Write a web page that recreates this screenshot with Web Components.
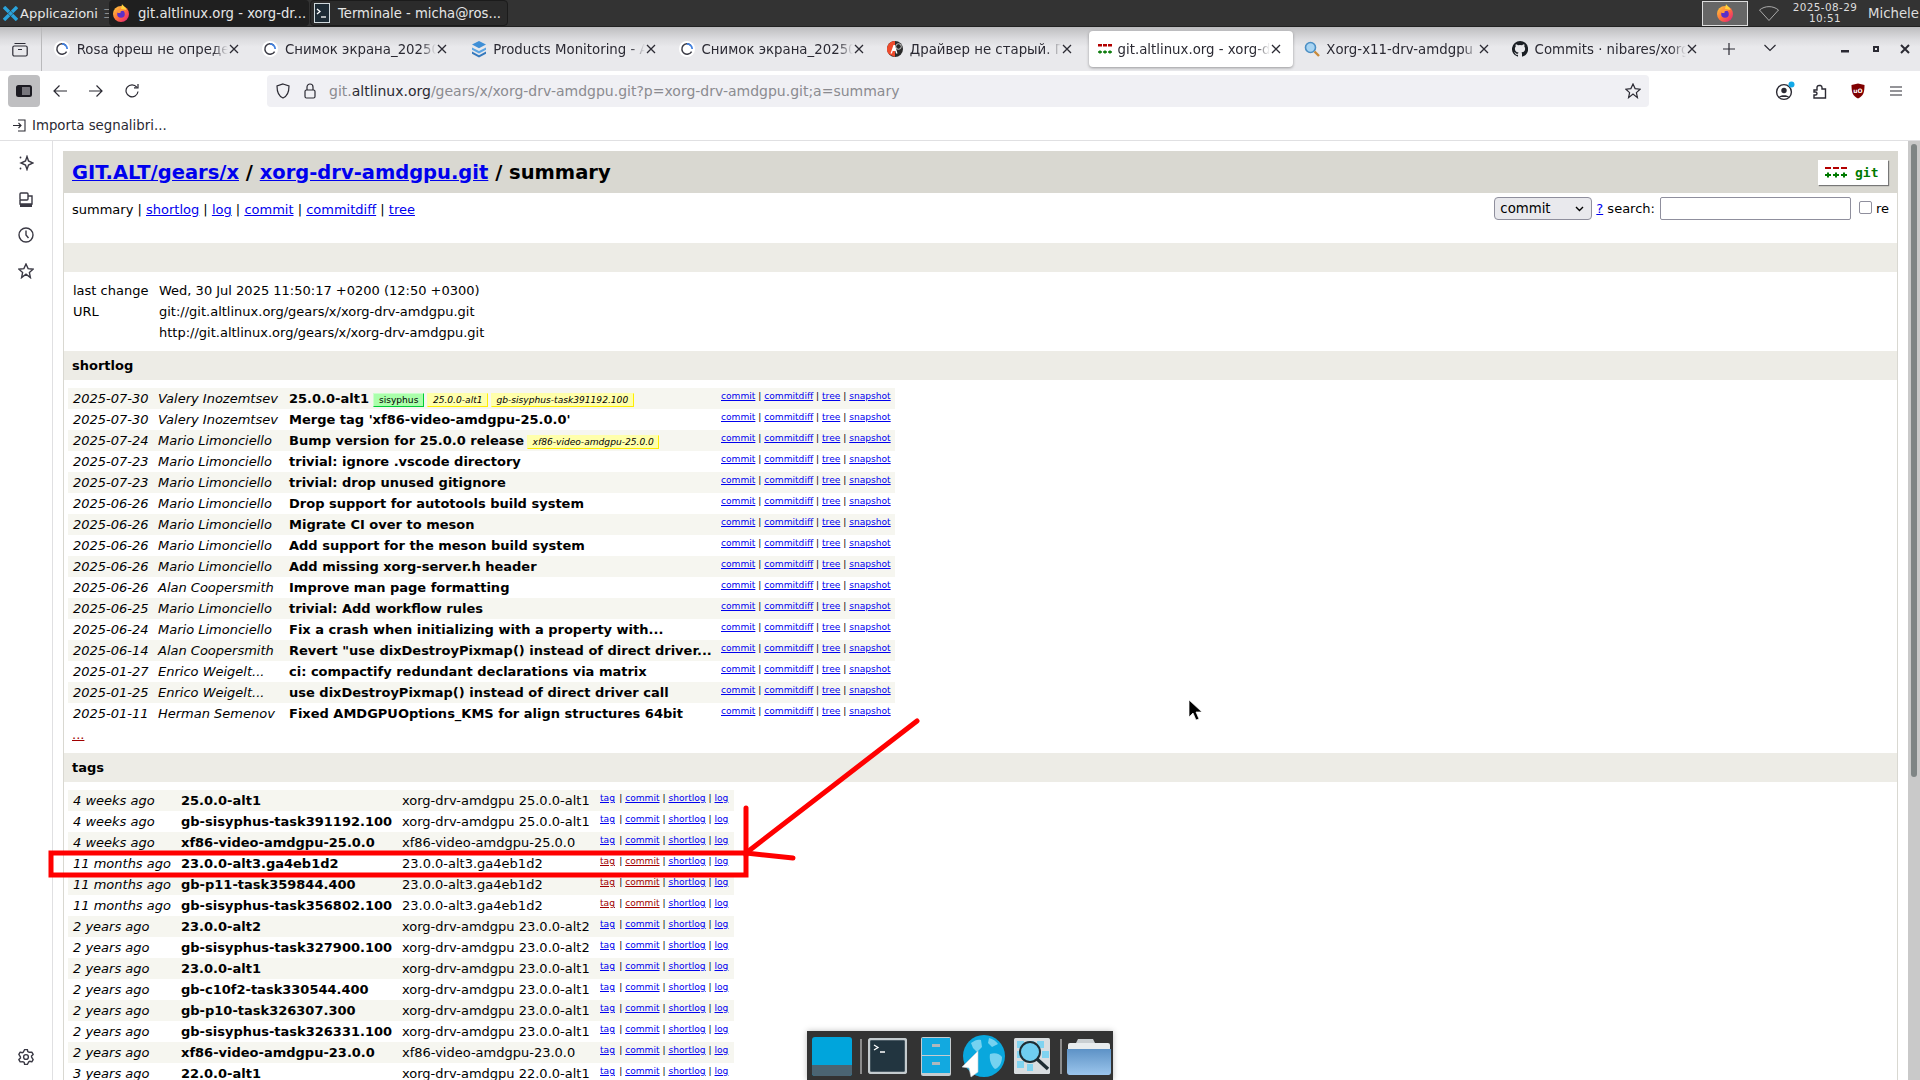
<!DOCTYPE html>
<html lang="it">
<head>
<meta charset="utf-8">
<title>git.altlinux.org - xorg-drv-amdgpu.git/summary</title>
<style>
    html, body { margin: 0; height: 100%; overflow: hidden; background: #fff; }
    body { position: relative; width: 1920px; height: 1080px; font-family: "DejaVu Sans", sans-serif; }
    .window { display: flex; flex-direction: column; height: 1080px; }
    .main { display: flex; flex: 1; min-height: 0; }
</style>
</head>
<body>
<div class="window">
    <desk-panel></desk-panel>
    <tab-strip></tab-strip>
    <nav-toolbar></nav-toolbar>
    <bookmark-bar></bookmark-bar>
    <div class="main">
        <side-rail></side-rail>
        <gitweb-page></gitweb-page>
    </div>
</div>
<red-markup></red-markup>
<app-dock></app-dock>

<script>
const FONT = `"DejaVu Sans", sans-serif`;

// favicons and toolbar glyphs, drawn by hand
const ICONS = {
    loader: `<svg width="16" height="16" viewBox="0 0 16 16"><circle cx="8" cy="8" r="8" fill="#fff"/><path d="M11.6 4.2A5.2 5.2 0 1 0 12.6 10.6" fill="none" stroke="#3c3c46" stroke-width="1.5"/><path d="M8 2.8a5.2 5.2 0 0 1 5.2 5.2" fill="none" stroke="#3f7fe0" stroke-width="1.7"/></svg>`,
    stack: `<svg width="16" height="18" viewBox="0 0 16 18"><path d="M8 1l7 3.6-7 3.6-7-3.6z" fill="#3f8fd6"/><path d="M1 7.4l7 3.6 7-3.6v2.4l-7 3.6-7-3.6z" fill="#5ba4e2"/><path d="M1 11.6l7 3.6 7-3.6v2.2L8 17.400l-7-3.600z" fill="#3579bd"/></svg>`,
    redball: `<svg width="16" height="16" viewBox="0 0 16 16"><circle cx="8" cy="8" r="8" fill="#2a2a2a"/><path d="M8 0a8 8 0 0 0-6 13.300L8 16z" fill="#ef4b2c"/><path d="M3.500 12.500L6.500 4h1.500l2.500 8.500H9L8.400 10H5.700l-.8 2.500z" fill="#fff"/><circle cx="11.500" cy="5.500" r="2.800" fill="none" stroke="#ccc" stroke-width="1"/></svg>`,
    git: `<svg width="16" height="16" viewBox="0 0 16 16"><path d="M1 3h4v2.500H1zM6 3h4v2.500H6zM11 3h4v2.500h-4z" fill="#b30000"/><path d="M1 11h4M3 9.500v3M6 11h4M8 9.500v3M11 11h4M13 9.500v3" stroke="#087a08" stroke-width="1.700"/></svg>`,
    lens: `<svg width="16" height="16" viewBox="0 0 16 16"><circle cx="6.500" cy="6.500" r="5" fill="#a8d4f2" stroke="#4b8fc4" stroke-width="1.600"/><path d="M10.500 10.500l4.500 4.500" stroke="#c98a3a" stroke-width="2.400"/></svg>`,
    github: `<svg width="16" height="16" viewBox="0 0 16 16"><path fill="#1b1f24" d="M8 0a8 8 0 0 0-2.530 15.590c.4.070.55-.170.55-.380v-1.340c-2.230.480-2.700-1.070-2.700-1.070-.360-.930-.890-1.170-.890-1.170-.730-.500.050-.490.050-.490.800.060 1.230.830 1.230.830.710 1.220 1.870.870 2.330.660.070-.520.280-.870.510-1.070-1.780-.200-3.640-.890-3.640-3.950 0-.870.310-1.590.820-2.150-.080-.200-.360-1.020.080-2.120 0 0 .670-.210 2.200.820a7.650 7.650 0 0 1 4 0c1.530-1.040 2.200-.820 2.200-.820.440 1.100.160 1.920.080 2.120.510.560.820 1.270.820 2.150 0 3.070-1.870 3.750-3.650 3.950.290.250.540.730.540 1.480v2.200c0 .210.150.460.550.380A8 8 0 0 0 8 0z"/></svg>`,
    firefox: `<svg width="16" height="18" viewBox="0 0 16 18"><defs><linearGradient id="ff" x1="0" y1="0" x2="1" y2="1"><stop offset="0" stop-color="#ffd23c"/><stop offset=".5" stop-color="#ff7139"/><stop offset="1" stop-color="#e31587"/></linearGradient></defs><circle cx="8" cy="10" r="8" fill="url(#ff)"/><path d="M9 0c1 2 4 3 4.500 6L8 5z" fill="#ffd23c"/><circle cx="8" cy="10" r="3.800" fill="#5b2fc9"/><path d="M4 7c2-2 5-2 7 0-2-.600-4 0-3.500 2L4.500 9z" fill="#ff9a3c"/></svg>`,
    terminal: `<svg width="16" height="20" viewBox="0 0 16 20"><rect x=".5" y=".5" width="15" height="19" fill="#1d2b35" stroke="#cfd8dc"/><path d="M3 6l3 2.500-3 2.500" fill="none" stroke="#fff" stroke-width="1.300"/><path d="M7 14h5" stroke="#fff" stroke-width="1.300"/></svg>`
};

// six tooth outline for the settings button
function gearPath(cx, cy, outer, inner) {
    const pts = [];
    for (let i = 0; i < 6; i++) {
        const a = i * Math.PI / 3 - Math.PI / 2;
        [[-0.32, outer], [0.32, outer], [0.6, inner], [0.98, inner]].forEach(([d, r]) => {
            pts.push(`${(cx + r * Math.cos(a + d * 0.55)).toFixed(2)} ${(cy + r * Math.sin(a + d * 0.55)).toFixed(2)}`);
        });
    }
    return 'M' + pts.join('L') + 'z';
}

class DeskPanel extends HTMLElement {
    constructor() {
        super();
        this.attachShadow({ mode: 'open' });
    }

    connectedCallback() {
        this.shadowRoot.innerHTML = `
            <style>
                :host { display: flex; align-items: center; height: 27px; background: #333; color: #e6e6e6; font: 13px ${FONT}; overflow: hidden; box-sizing: border-box; border-bottom: 1px solid #222; }
                .apps { display: flex; align-items: center; gap: 2px; padding-left: 3px; width: 109px; box-sizing: border-box; flex: none; white-space: nowrap; overflow: hidden; }
                .cut { color: #8d8d8d; margin-left: 3px; }
                .btn { display: flex; align-items: center; gap: 9px; height: 26px; width: 200px; box-sizing: border-box; padding-left: 4px; border-radius: 4px; background: #1f1f1f; flex: none; white-space: nowrap; font-size: 13.200px; }
                .btn + .btn { background: #2b2b2b; border: 1px solid #1b1b1b; width: 198px; padding-left: 3px; margin-left: 1px; gap: 8px; }
                .tray { margin-left: auto; display: flex; align-items: center; flex: none; }
                .ff { width: 46px; height: 25px; box-sizing: border-box; border: 1px solid #ddd; background: #666; display: flex; align-items: center; justify-content: center; }
                .wifi { margin: 0 11px; display: block; }
                .clock { font-size: 10.400px; line-height: 11px; text-align: center; width: 70px; letter-spacing: .4px; color: #ddd; white-space: nowrap; }
                .user { margin-left: 8px; width: 52px; overflow: hidden; white-space: nowrap; color: #ddd; font-size: 13.300px; }
            </style>
            <div class="apps">
                <svg width="15" height="15" viewBox="0 0 15 15" style="flex:none"><path d="M1 1l5 5M14 1L9 6M1 14l5-5M14 14L9 9" stroke="#2aa3dc" stroke-width="3.400"/><path d="M7.500 5L10 7.500 7.500 10 5 7.500z" fill="#2aa3dc"/></svg>
                <span>Applicazioni</span><span class="cut">Ξ</span>
            </div>
            <div class="btn">${ICONS.firefox}<span>git.altlinux.org - xorg-dr...</span></div>
            <div class="btn">${ICONS.terminal}<span>Terminale - micha@ros...</span></div>
            <div class="tray">
                <div class="ff">${ICONS.firefox}</div>
                <svg class="wifi" width="20" height="16" viewBox="0 0 20 16"><path d="M.5 5C6 .5 14 .5 19.500 5L10 15.500z" fill="none" stroke="#c8c8c8" stroke-width=".8"/></svg>
                <div class="clock">2025-08-29<br>10:51</div>
                <div class="user">Michele</div>
            </div>
        `;
    }
}

class BrowserTab extends HTMLElement {
    constructor() {
        super();
        this.attachShadow({ mode: 'open' });
    }

    connectedCallback() {
        this.render();
    }

    render() {
        const title = this.getAttribute('title') || '';
        const icon = ICONS[this.getAttribute('icon')] || '';
        this.shadowRoot.innerHTML = `
            <style>
                :host { display: flex; align-items: center; width: 204px; height: 36px; margin: 0 2.150px; padding: 0 12px 0 7px; box-sizing: border-box; color: #2b2a33; font: 13.330px ${FONT}; flex: none; border-radius: 4px; }
                :host([active]) { background: #fff; box-shadow: 0 1px 3px rgba(0,0,0,.35); padding-left: 8px; }
                .fav { width: 16px; height: 18px; display: flex; align-items: center; justify-content: center; flex: none; margin-right: 6.500px; }
                :host([active]) .fav { margin-right: 5px; }
                .text { flex: 1; overflow: hidden; white-space: nowrap; -webkit-mask-image: linear-gradient(90deg, #000 90%, transparent); mask-image: linear-gradient(90deg, #000 90%, transparent); }
                svg.x { flex: none; margin-left: 1px; }
            </style>
            <span class="fav">${icon}</span>
            <span class="text">${title}</span>
            <svg class="x" width="10" height="10" viewBox="0 0 10 10"><path d="M1 1l8 8M9 1L1 9" stroke="#2b2a33" stroke-width="1.300"/></svg>
        `;
    }
}

class TabStrip extends HTMLElement {
    constructor() {
        super();
        this.attachShadow({ mode: 'open' });
    }

    connectedCallback() {
        const tabs = [
            ['loader', 'Rosa фреш не определяет'],
            ['loader', 'Снимок экрана_20250829'],
            ['stack', 'Products Monitoring - ALT'],
            ['loader', 'Снимок экрана_20250829'],
            ['redball', 'Драйвер не старый. Просто'],
            ['git', 'git.altlinux.org - xorg-drv', true],
            ['lens', 'Xorg-x11-drv-amdgpu'],
            ['github', 'Commits · nibares/xorg-drv']
        ];
        this.shadowRoot.innerHTML = `
            <style>
                :host { display: flex; align-items: center; height: 44px; background: linear-gradient(#bdbdbf 0, #dcdcdf 12px, #e9e9ec 20px); flex: none; }
                .lib { width: 42px; height: 44px; box-sizing: border-box; border-right: 1px solid #b9b9bb; display: flex; align-items: center; justify-content: center; flex: none; margin-right: 3px; padding-right: 2px; }
                .tabs { display: flex; flex: none; }
                .new { margin-left: 12px; display: block; flex: none; }
                .more { margin-left: 29px; display: block; flex: none; margin-top: -2px; }
                .win { margin-left: auto; display: flex; align-items: center; padding-right: 10px; flex: none; }
                .win svg { display: block; }
            </style>
            <div class="lib">
                <svg width="16" height="16" viewBox="0 0 16 16" fill="none" stroke="#2b2a33" stroke-width="1.200"><rect x=".8" y="5" width="14.400" height="10" rx="1.500"/><path d="M2.500 2.500h11M6 8.500h4"/></svg>
            </div>
            <div class="tabs">
                ${tabs.map(t => `<browser-tab icon="${t[0]}" title="${t[1]}" ${t[2] ? 'active' : ''}></browser-tab>`).join('')}
            </div>
            <svg class="new" width="12" height="12" viewBox="0 0 12 12"><path d="M6 0v12M0 6h12" stroke="#2b2a33" stroke-width="1.200"/></svg>
            <svg class="more" width="12" height="8" viewBox="0 0 12 8"><path d="M.5 1L6 6.500 11.500 1" fill="none" stroke="#2b2a33" stroke-width="1.200"/></svg>
            <div class="win">
                <svg width="8" height="3" viewBox="0 0 8 3" style="margin-right:24px;margin-top:5px"><rect width="8" height="2.500" fill="#2b2a33"/></svg>
                <svg width="6" height="6" viewBox="0 0 6 6" style="margin-right:21px"><rect x="1" y="1" width="4" height="4" fill="none" stroke="#2b2a33" stroke-width="2"/></svg>
                <svg width="10" height="10" viewBox="0 0 10 10"><path d="M1 1l8 8M9 1L1 9" stroke="#2b2a33" stroke-width="2"/></svg>
            </div>
        `;
    }
}

class NavToolbar extends HTMLElement {
    constructor() {
        super();
        this.attachShadow({ mode: 'open' });
    }

    connectedCallback() {
        const stroke = 'fill="none" stroke="#2b2a33" stroke-width="1.200"';
        this.shadowRoot.innerHTML = `
            <style>
                :host { display: flex; align-items: center; height: 46px; background: #fff; flex: none; padding: 4px 0 10px 8px; box-sizing: border-box; color: #2b2a33; }
                .side { width: 32px; height: 32px; border-radius: 4px; background: #bfbfc1; display: flex; align-items: center; justify-content: center; flex: none; }
                .nav { flex: none; display: block; }
                .url { width: 1382px; height: 32px; margin-left: 128px; border-radius: 4px; background: #f0f0f4; display: flex; align-items: center; box-sizing: border-box; padding-left: 9px; flex: none; font: 14px ${FONT}; color: #8b8b90; white-space: nowrap; }
                .url b { font-weight: 400; color: #2b2a33; }
                .addr { margin-left: 13px; flex: 1; overflow: hidden; }
                .tools { flex: none; margin-left: 126px; display: flex; align-items: center; }
                .star { margin-right: 8px; flex: none; }
            </style>
            <div class="side"><svg width="16" height="12" viewBox="0 0 16 12"><rect x="1" y="1" width="14" height="10" rx="1.500" fill="#77767c" stroke="#1c1b22" stroke-width="2"/><rect x="1" y="1" width="5" height="10" fill="#1c1b22"/></svg></div>
            <svg class="nav" style="margin-left:13px" width="14" height="14" viewBox="0 0 14 14"><path d="M6.500 1.500L1 7l5.500 5.500M1 7h13" ${stroke}/></svg>
            <svg class="nav" style="margin-left:22px" width="14" height="14" viewBox="0 0 14 14"><path d="M7.500 1.500L13 7l-5.500 5.500M13 7H0" ${stroke}/></svg>
            <svg class="nav" style="margin-left:22px" width="14" height="14" viewBox="0 0 14 14"><path d="M11.800 3.200A6 6 0 1 0 13 7.500" ${stroke}/><path d="M9 3.800h4V0" ${stroke}/></svg>
            <div class="url">
                <svg width="14" height="16" viewBox="0 0 14 16" style="flex:none"><path d="M7 1l6 2c0 6-1 10-6 12C2 13 1 9 1 3z" ${stroke}/></svg>
                <svg width="12" height="16" viewBox="0 0 12 16" style="flex:none;margin-left:14px"><rect x="1" y="7" width="10" height="8" rx="1.500" ${stroke}/><path d="M3 7V4a3 3 0 0 1 6 0v3" ${stroke}/></svg>
                <span class="addr">git.<b>altlinux.org</b>/gears/x/xorg-drv-amdgpu.git?p=xorg-drv-amdgpu.git;a=summary</span>
                <svg class="star" width="16" height="16" viewBox="0 0 16 16"><path d="M8 1l2.100 4.600 5 .6-3.700 3.400 1 5L8 11.100 3.600 14.600l1-5L.9 6.200l5-.6z" ${stroke}/></svg>
            </div>
            <div class="tools">
                <svg width="18" height="18" viewBox="0 0 18 18" style="overflow:visible"><circle cx="9" cy="10" r="7.400" fill="none" stroke="#2b2a33" stroke-width="1.400"/><circle cx="9" cy="8.500" r="2.700" fill="#2b2a33"/><path d="M4 15c1-2.500 9-2.500 10 0" fill="#2b2a33"/><circle cx="16.500" cy="2.500" r="3" fill="#12a9e8"/></svg>
                <svg width="14" height="16" viewBox="0 0 14 16" style="margin-left:20px"><path d="M1 7h3V4.500a2 2 0 0 1 2.500-2h1A2 2 0 0 1 9 4.500V6h3.500v9H1v-3h1.500a1.500 1.500 0 0 0 0-3H1z" fill="none" stroke="#2b2a33" stroke-width="1.400"/></svg>
                <svg width="14" height="16" viewBox="0 0 14 16" style="margin-left:24px"><path d="M7 .5l6.500 1.500c0 7-1 11-6.500 13.500C1.500 13 .5 9 .5 2z" fill="#800000"/><text x="7" y="9.500" font-family="DejaVu Sans" font-size="6" font-weight="700" fill="#fff" text-anchor="middle">uO</text></svg>
                <svg width="12" height="10" viewBox="0 0 12 10" style="margin-left:25px"><path d="M0 1h12M0 5h12M0 9h12" stroke="#2b2a33" stroke-width="1.200"/></svg>
            </div>
        `;
    }
}

class BookmarkBar extends HTMLElement {
    constructor() {
        super();
        this.attachShadow({ mode: 'open' });
    }

    connectedCallback() {
        this.shadowRoot.innerHTML = `
            <style>
                :host { display: flex; align-items: center; gap: 6px; height: 24px; background: #fff; border-bottom: 1px solid #e0e0e2; padding: 0 0 6px 13px; box-sizing: border-box; font: 13.330px ${FONT}; color: #2b2a33; flex: none; }
            </style>
            <svg width="13" height="13" viewBox="0 0 13 13" fill="none" stroke="#2b2a33" stroke-width="1.100"><path d="M5 1h7v11H5M0 6.500h8M5.500 4l2.500 2.500L5.500 9"/></svg>
            <span>Importa segnalibri...</span>
        `;
    }
}

class SideRail extends HTMLElement {
    constructor() {
        super();
        this.attachShadow({ mode: 'open' });
    }

    connectedCallback() {
        const s = 'fill="none" stroke="#3a3944" stroke-width="1.400"';
        this.shadowRoot.innerHTML = `
            <style>
                :host { display: flex; flex-direction: column; align-items: center; width: 53px; box-sizing: border-box; flex: none; background: #fff; border-right: 1px solid #e0e0e2; padding: 14px 0 15px; }
                svg { display: block; margin-bottom: 20px; }
                svg:last-child { margin: auto 0 0; }
            </style>
            <svg width="16" height="16" viewBox="0 0 16 16"><path d="M9 1.500l1.500 4.500 4.500 2-4.500 2L9 14.500 7.500 10 3 8l4.500-2z" ${s}/><circle cx="2.500" cy="2.500" r=".9" fill="#3a3944"/><circle cx="2.500" cy="13.500" r=".9" fill="#3a3944"/></svg>
            <svg width="16" height="16" viewBox="0 0 16 16" style="transform:translateY(1px)"><rect x="2" y="1" width="8" height="7" rx="1" ${s}/><path d="M10 4h4v8H2V8" ${s}/><rect x="2" y="12" width="12" height="3" fill="#3a3944"/></svg>
            <svg width="16" height="16" viewBox="0 0 16 16"><circle cx="8" cy="8" r="7" ${s}/><path d="M8 3.500V8l2.500 3" ${s}/></svg>
            <svg width="16" height="16" viewBox="0 0 16 16"><path d="M8 1l2.100 4.600 5 .6-3.700 3.400 1 5L8 11.100 3.600 14.600l1-5L.9 6.200l5-.6z" ${s}/></svg>
            <svg width="16" height="16" viewBox="0 0 16 16"><circle cx="8" cy="8" r="2.400" ${s}/><path d="${gearPath(8, 8, 7.600, 5.600)}" ${s} stroke-linejoin="round"/></svg>
        `;
    }
}

class GitwebPage extends HTMLElement {
    constructor() {
        super();
        this.attachShadow({ mode: 'open' });
    }

    shortlog() {
        const rows = [
            ['2025-07-30', 'Valery Inozemtsev', '25.0.0-alt1', [['ref-head', 'sisyphus'], ['ref-tag', '25.0.0-alt1'], ['ref-tag', 'gb-sisyphus-task391192.100']]],
            ['2025-07-30', 'Valery Inozemtsev', "Merge tag 'xf86-video-amdgpu-25.0.0'"],
            ['2025-07-24', 'Mario Limonciello', 'Bump version for 25.0.0 release', [['ref-tag', 'xf86-video-amdgpu-25.0.0']]],
            ['2025-07-23', 'Mario Limonciello', 'trivial: ignore .vscode directory'],
            ['2025-07-23', 'Mario Limonciello', 'trivial: drop unused gitignore'],
            ['2025-06-26', 'Mario Limonciello', 'Drop support for autotools build system'],
            ['2025-06-26', 'Mario Limonciello', 'Migrate CI over to meson'],
            ['2025-06-26', 'Mario Limonciello', 'Add support for the meson build system'],
            ['2025-06-26', 'Mario Limonciello', 'Add missing xorg-server.h header'],
            ['2025-06-26', 'Alan Coopersmith', 'Improve man page formatting'],
            ['2025-06-25', 'Mario Limonciello', 'trivial: Add workflow rules'],
            ['2025-06-24', 'Mario Limonciello', 'Fix a crash when initializing with a property with...'],
            ['2025-06-14', 'Alan Coopersmith', 'Revert "use dixDestroyPixmap() instead of direct driver...'],
            ['2025-01-27', 'Enrico Weigelt...', 'ci: compactify redundant declarations via matrix'],
            ['2025-01-25', 'Enrico Weigelt...', 'use dixDestroyPixmap() instead of direct driver call'],
            ['2025-01-11', 'Herman Semenov', 'Fixed AMDGPUOptions_KMS for align structures 64bit']
        ];
        return rows.map(r => `
            <div class="row log">
                <i>${r[0]}</i>
                <i>${r[1]}</i>
                <span class="subj"><b>${r[2]}</b>${(r[3] || []).map(l => `<span class="ref ${l[0]}">${l[1]}</span>`).join('')}</span>
                <span class="links"><a>commit</a> | <a>commitdiff</a> | <a>tree</a> | <a>snapshot</a></span>
            </div>`).join('');
    }

    tags() {
        const rows = [
            ['4 weeks ago', '25.0.0-alt1', 'xorg-drv-amdgpu 25.0.0-alt1'],
            ['4 weeks ago', 'gb-sisyphus-task391192.100', 'xorg-drv-amdgpu 25.0.0-alt1'],
            ['4 weeks ago', 'xf86-video-amdgpu-25.0.0', 'xf86-video-amdgpu-25.0.0'],
            ['11 months ago', '23.0.0-alt3.ga4eb1d2', '23.0.0-alt3.ga4eb1d2', true],
            ['11 months ago', 'gb-p11-task359844.400', '23.0.0-alt3.ga4eb1d2', true],
            ['11 months ago', 'gb-sisyphus-task356802.100', '23.0.0-alt3.ga4eb1d2', true],
            ['2 years ago', '23.0.0-alt2', 'xorg-drv-amdgpu 23.0.0-alt2'],
            ['2 years ago', 'gb-sisyphus-task327900.100', 'xorg-drv-amdgpu 23.0.0-alt2'],
            ['2 years ago', '23.0.0-alt1', 'xorg-drv-amdgpu 23.0.0-alt1'],
            ['2 years ago', 'gb-c10f2-task330544.400', 'xorg-drv-amdgpu 23.0.0-alt1'],
            ['2 years ago', 'gb-p10-task326307.300', 'xorg-drv-amdgpu 23.0.0-alt1'],
            ['2 years ago', 'gb-sisyphus-task326331.100', 'xorg-drv-amdgpu 23.0.0-alt1'],
            ['2 years ago', 'xf86-video-amdgpu-23.0.0', 'xf86-video-amdgpu-23.0.0'],
            ['3 years ago', '22.0.0-alt1', 'xorg-drv-amdgpu 22.0.0-alt1']
        ];
        return rows.map(r => `
            <div class="row tag">
                <i>${r[0]}</i>
                <b>${r[1]}</b>
                <span>${r[2]}</span>
                <span class="links"><a class="first ${r[3] ? 'seen' : ''}">tag</a> &nbsp;| <a class="${r[3] ? 'seen' : ''}">commit</a> | <a>shortlog</a> | <a>log</a></span>
            </div>`).join('');
    }

    connectedCallback() {
        this.shadowRoot.innerHTML = `
            <style>
                :host { display: flex; flex: 1; min-width: 0; background: #fff; font: 13px/21px ${FONT}; color: #000; overflow: hidden; }
                a { color: #0000ee; text-decoration: underline; }
                a.seen { color: #a00000; }
                a.first { margin-right: -1.500px; }
                .scroll { flex: 1; min-width: 0; padding: 10px 10px 0; overflow: hidden; }
                .body { border: solid #d9d8d1; border-width: 1px 1px 0; }
                .bar { width: 12px; background: #c9c9c9; flex: none; padding: 3px 3px 0; box-sizing: border-box; }
                .thumb { height: 633px; background: #7f8585; border-radius: 3px; }
                .head { height: 42px; background: #d9d8d1; display: flex; align-items: center; justify-content: space-between; padding: 0 10px 0 9px; margin: -1px -1px 0; font-size: 19.500px; font-weight: 700; }
                .logo { width: 70px; height: 25px; background: #fff; box-shadow: 1px 1px 1px #777; box-sizing: border-box; padding-left: 7px; display: flex; align-items: center; gap: 8px; color: #007a00; font: 700 13px "DejaVu Sans Mono", monospace; margin-top: 1px; }
                .nav { display: flex; justify-content: space-between; height: 50px; padding: 6px 8px 0 8px; box-sizing: border-box; }
                .search { display: flex; align-items: center; height: 23px; margin-top: -2px; }
                .select { width: 98px; height: 23px; box-sizing: border-box; border: 1px solid #8f8f9d; border-radius: 4px; background: #e9e9ed; display: flex; align-items: center; justify-content: space-between; padding: 0 7px 0 5px; margin-right: 4px; font-size: 13.300px; }
                .input { width: 191px; height: 23px; box-sizing: border-box; border: 1px solid #8f8f9d; border-radius: 2px; margin: 0 8px 0 5px; background: #fff; }
                .check { width: 13px; height: 13px; box-sizing: border-box; border: 1px solid #8f8f9d; border-radius: 2px; margin-right: 4px; margin-top: -3px; }
                .title { background: #edece6; height: 29px; line-height: 29px; padding-left: 8px; font-weight: 700; }
                .spacer { height: 8px; }
                .details { padding: 8px 0 8px 9px; height: 79px; box-sizing: border-box; }
                .details div { display: grid; grid-template-columns: 86px auto; height: 21px; }
                .row { display: grid; height: 21px; white-space: nowrap; }
                .row:nth-of-type(odd) { background: #f6f6f0; }
                .row > * { padding-left: 4px; }
                .row > i:first-child { padding-left: 5px; }
                .table { margin-left: 4px; }
                .log { width: 827px; grid-template-columns: 86px 131px 432px 178px; }
                .tag { width: 666px; grid-template-columns: 109px 221px 198px 138px; }
                .links { font-size: 9.100px; line-height: 16px; }
                .ref { display: inline-block; font-size: 9.100px; line-height: 12px; font-weight: 400; margin-left: 3px; padding: 0 4.500px; vertical-align: 0; border: 1px solid; }
                .ref-tag { font-style: italic; background: #ffffab; border-color: #ffffab #ffee00 #ffee00 #ffffab; }
                .ref-head { background: #aaffaa; border-color: #ccffcc #00cc33 #00cc33 #ccffcc; margin-left: 4px; padding: 0 5px; }
                .more { display: block; padding-left: 8px; height: 21px; margin-bottom: 8px; }
                .more a { color: #a00000; }
            </style>
            <div class="scroll">
                <div class="body">
                    <div class="head">
                        <span><a>GIT.ALT/gears/x</a> / <a>xorg-drv-amdgpu.git</a> / summary</span>
                        <span class="logo"><svg width="22" height="12" viewBox="0 0 22 12"><path d="M0 0h6v2H0zM8 0h6v2H8zM16 0h6v2h-6z" fill="#b30000"/><path d="M0 8h6M3 5.500v5M8 8h6M11 5.500v5M16 8h6M19 5.500v5" stroke="#007a00" stroke-width="2"/></svg>git</span>
                    </div>
                    <div class="nav">
                        <span>summary | <a>shortlog</a> | <a>log</a> | <a>commit</a> | <a>commitdiff</a> | <a>tree</a></span>
                        <span class="search">
                            <span class="select">commit <svg width="9" height="6" viewBox="0 0 9 6"><path d="M1 1l3.500 3.500L8 1" fill="none" stroke="#000" stroke-width="1.400"/></svg></span>
                            <a>?</a>&nbsp;search:
                            <span class="input"></span>
                            <span class="check"></span>re
                        </span>
                    </div>
                    <div class="title"></div>
                    <div class="details">
                        <div><span>last change</span><span>Wed, 30 Jul 2025 11:50:17 +0200 (12:50 +0300)</span></div>
                        <div><span>URL</span><span>git://git.altlinux.org/gears/x/xorg-drv-amdgpu.git</span></div>
                        <div><span></span><span>http://git.altlinux.org/gears/x/xorg-drv-amdgpu.git</span></div>
                    </div>
                    <div class="title">shortlog</div>
                    <div class="spacer"></div>
                    <div class="table">${this.shortlog()}</div>
                    <div class="more"><a>...</a></div>
                    <div class="title">tags</div>
                    <div class="spacer"></div>
                    <div class="table">${this.tags()}</div>
                </div>
            </div>
            <div class="bar"><div class="thumb"></div></div>
        `;
    }
}

// the hand-drawn annotation and the mouse pointer lie on top of the page
class RedMarkup extends HTMLElement {
    constructor() {
        super();
        this.attachShadow({ mode: 'open' });
    }

    connectedCallback() {
        this.shadowRoot.innerHTML = `
            <style>
                :host { position: absolute; inset: 0; pointer-events: none; display: block; }
                svg { position: absolute; left: 0; top: 0; }
            </style>
            <svg width="1920" height="1080" viewBox="0 0 1920 1080">
                <path d="M51 853H746V875H51z" fill="none" stroke="#ff0000" stroke-width="5"/>
                <g stroke="#ff0000" stroke-width="5" stroke-linecap="round" fill="none">
                    <path d="M917 721L746 853"/>
                    <path d="M746 808L746 855"/>
                    <path d="M746 853L793 858"/>
                </g>
                <path d="M1189 700v17l4-4 3 7 3-1-3-7h6z" fill="#000" stroke="#fff" stroke-width=".7"/>
            </svg>
        `;
    }
}

class AppDock extends HTMLElement {
    constructor() {
        super();
        this.attachShadow({ mode: 'open' });
    }

    connectedCallback() {
        this.shadowRoot.innerHTML = `
            <style>
                :host { position: absolute; left: 807px; bottom: 0; width: 306px; height: 49px; background: #333; display: flex; align-items: center; box-sizing: border-box; padding: 1px 0 0 5px; box-shadow: 0 0 6px rgba(0,0,0,.25); overflow: hidden; }
                svg { display: block; flex: none; }
                .sep { width: 2px; height: 35px; background: #8c8c8c; flex: none; }
            </style>
            <svg width="40" height="39" viewBox="0 0 40 39"><rect width="40" height="39" rx="3" fill="#00a5dc"/><path d="M0 28h40v8a3 3 0 0 1-3 3H3a3 3 0 0 1-3-3z" fill="#4b6472"/></svg>
            <div class="sep" style="margin:0 6px 0 8px"></div>
            <svg width="39" height="36" viewBox="0 0 39 36"><rect x="1" y="1" width="37" height="34" rx="2" fill="#223540" stroke="#c4cbce" stroke-width="2.400"/><path d="M6 7l4 2.500-4 2.500" fill="none" stroke="#fff" stroke-width="1.300"/><path d="M12 14h5" stroke="#fff" stroke-width="1.500"/></svg>
            <svg width="30" height="39" viewBox="0 0 30 39" style="margin-left:14px"><rect width="30" height="39" rx="2" fill="#c5ccd0"/><rect x="1" y="1" width="28" height="17" fill="#12a9e0"/><rect x="1" y="19" width="28" height="17" fill="#12a9e0"/><rect x="11" y="7" width="8" height="3" fill="#aeb8bd"/><rect x="11" y="25" width="8" height="3" fill="#aeb8bd"/></svg>
            <svg width="42" height="42" viewBox="0 0 42 42" style="margin-left:12px;overflow:visible"><circle cx="21" cy="21" r="21" fill="#09a7dd"/><path d="M8 8c4-3 7-4 10-3l1 7-5 5-4-4zM26 3c4 1 7 3 9 6l-6 3-4-4zM27 19c5-2 10 0 12 3 0 6-3 11-7 12-4-3-6-10-5-15z" fill="#75d2f0"/><path d="M15 16L-1 32l7 1 2 9 7-5z" fill="#fff" stroke="#c5cdd1" stroke-width=".6"/></svg>
            <svg width="36" height="36" viewBox="0 0 36 36" style="margin-left:9px"><rect width="36" height="36" rx="1.500" fill="#d8dde0"/><path d="M3 3h7v7H3zM13 3h7v7h-7zM23 3h7v7h-7zM3 13h7v7H3zM28 13h7v7h-7zM3 23h7v7H3zM13 26h6v7h-6z" fill="#7fd3f0"/><circle cx="16" cy="14" r="10" fill="#6fcdf0" stroke="#1e2c33" stroke-width="2"/><path d="M23 21l11 10" stroke="#1e2c33" stroke-width="3.500"/></svg>
            <div class="sep" style="margin:0 5px 0 10px"></div>
            <svg width="44" height="37" viewBox="0 0 44 37"><path d="M9 5l2-4h15l2 4z" fill="#c9ced1"/><path d="M1 7a2 2 0 0 1 2-2h38a2 2 0 0 1 2 2v27a3 3 0 0 1-3 3H4a3 3 0 0 1-3-3z" fill="#e8ecee"/><linearGradient id="fold" x1="0" y1="0" x2="0" y2="1"><stop offset="0" stop-color="#5d92c6"/><stop offset="1" stop-color="#9bc5ec"/></linearGradient><path d="M0 11h44v23a3 3 0 0 1-3 3H3a3 3 0 0 1-3-3z" fill="url(#fold)"/></svg>
        `;
    }
}

customElements.define('desk-panel', DeskPanel);
customElements.define('browser-tab', BrowserTab);
customElements.define('tab-strip', TabStrip);
customElements.define('nav-toolbar', NavToolbar);
customElements.define('bookmark-bar', BookmarkBar);
customElements.define('side-rail', SideRail);
customElements.define('gitweb-page', GitwebPage);
customElements.define('red-markup', RedMarkup);
customElements.define('app-dock', AppDock);
</script>
</body>
</html>
